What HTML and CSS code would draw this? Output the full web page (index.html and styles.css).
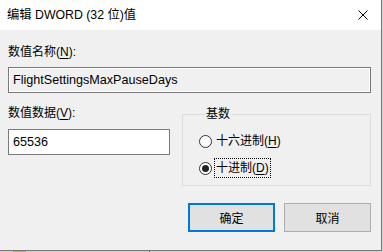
FILE: index.html
```html
<!DOCTYPE html>
<html lang="zh-CN">
<head>
  <meta charset="UTF-8">
  <title>编辑 DWORD (32 位)值</title>
  <link rel="stylesheet" href="styles.css">
</head>
<body>
  <div class="dialog">
    <div class="titlebar">
      <span class="title">编辑 DWORD (32 位)值</span>
      <svg class="close" width="12" height="12" viewBox="0 0 12 12">
        <path d="M1.5 1.5 L10.5 10.5 M10.5 1.5 L1.5 10.5" stroke="#000" stroke-width="1" fill="none"/>
      </svg>
    </div>

    <div class="content">
      <div class="label">数值名称(<u>N</u>):</div>
      <div class="edit readonly">FlightSettingsMaxPauseDays</div>

      <div class="row">
        <div class="col">
          <div class="label">数值数据(<u>V</u>):</div>
          <div class="edit value">65536</div>
        </div>

        <fieldset class="group">
          <legend>基数</legend>
          <div class="radio">
            <span class="dot"></span>
            <span class="text">十六进制(<u>H</u>)</span>
          </div>
          <div class="radio">
            <span class="dot checked"></span>
            <span class="text focus">十进制(<u>D</u>)</span>
          </div>
        </fieldset>
      </div>

      <div class="buttons">
        <button class="btn default">确定</button>
        <button class="btn">取消</button>
      </div>
    </div>
  </div>
  <div class="under">
    <span class="folder"></span>
    <span class="split"></span>
  </div>
</body>
</html>
```

FILE: styles.css
```css
body {
  margin: 0;
  background: #d4d4d4;
  font-family: "Liberation Sans", "Noto Sans CJK SC", sans-serif;
  font-size: 12px;
  color: #000;
  width: 383px;
  height: 252px;
  overflow: hidden;
}
.dialog {
  width: 381px;
  height: 250px;
  background: #f0f0f0;
  border-right: 1px solid #777;
  border-bottom: 1px solid #777;
}
.titlebar {
  height: 30px;
  background: #fff;
  display: flex;
  align-items: center;
  padding-left: 7px;
}
.title {
  flex: 1;
  line-height: 16px;
  font-size: 12.3px;
}
.close {
  margin-right: 12px;
}
.content {
  padding: 14px 10px 0 8px;
}
.label {
  line-height: 16px;
}
u {
  text-decoration-thickness: 1px;
  text-underline-offset: 2px;
}
.edit {
  box-sizing: border-box;
  height: 26px;
  line-height: 24px;
  border: 1px solid #7a7a7a;
  padding: 0 4px;
  margin-top: 7px;
  font-size: 12.6px;
}
.edit.readonly {
  background: #f0f0f0;
  box-shadow: inset 0 0 0 1px #fff;
}
.edit.value {
  background: #fff;
  margin-top: 8px;
}
.row {
  display: grid;
  grid-template-columns: 162px 189px;
  column-gap: 12px;
  margin-top: 12px;
}
.group {
  margin: 1px 0 0 0;
  padding: 9px 0 7px 16px;
  border: 1px solid #dcdcdc;
  min-width: 0;
}
.group legend {
  margin-left: 6px;
  padding: 0 1px;
  line-height: 16px;
}
.radio {
  display: flex;
  align-items: center;
  height: 20px;
}
.radio + .radio {
  margin-top: 7px;
}
.dot {
  box-sizing: border-box;
  width: 13px;
  height: 13px;
  border: 1px solid #333;
  border-radius: 50%;
  background: #fff;
  display: flex;
  align-items: center;
  justify-content: center;
}
.dot.checked::after {
  content: "";
  width: 7px;
  height: 7px;
  border-radius: 50%;
  background: #222;
}
.text {
  margin-left: 2px;
  padding: 0 1px;
  line-height: 18px;
  border: 1px dotted transparent;
}
.text.focus {
  border-color: #000;
}
.buttons {
  display: flex;
  justify-content: flex-end;
  gap: 9px;
  margin-top: 17px;
}
.btn {
  box-sizing: border-box;
  width: 87px;
  height: 29px;
  background: #e1e1e1;
  border: 1px solid #adadad;
  font-family: inherit;
  font-size: 12px;
  color: #000;
  padding: 0;
}
.btn.default {
  border: 2px solid #0078d7;
}
.under {
  display: flex;
  height: 1px;
}
.folder {
  width: 13px;
  margin-left: 13px;
  background: #c9a94b;
}
.split {
  width: 1px;
  margin-left: 123px;
  background: #555;
}
```
